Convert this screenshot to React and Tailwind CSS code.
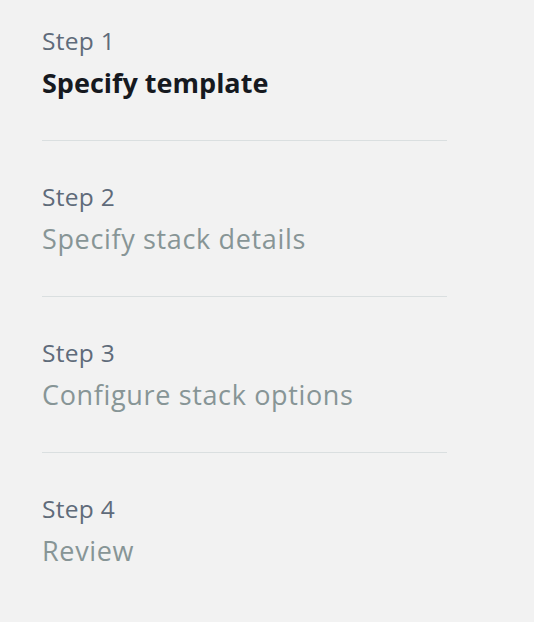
import React from 'react';

const STEPS = [
  { label: 'Step 1', title: 'Specify template', active: true },
  { label: 'Step 2', title: 'Specify stack details' },
  { label: 'Step 3', title: 'Configure stack options' },
  { label: 'Step 4', title: 'Review' },
];

function App() {
  return (
    <div
      className="min-h-[622px] w-[534px] bg-[#f2f2f2] pl-[42px] pt-[26px]"
      style={{ fontFamily: '"Open Sans", "Noto Sans", sans-serif' }}
    >
      <ul className="w-[405px]">
        {STEPS.map((step, i) => (
          <li
            key={step.label}
            className={
              i < STEPS.length - 1
                ? 'border-b border-[#dadfe0] pb-[41px] not-first:pt-[41px]'
                : 'pt-[41px]'
            }
          >
            <div className="text-[24.5px] leading-[30px] tracking-[0.3px] text-[#5f6b7a]">{step.label}</div>
            <div
              className={
                step.active
                  ? 'mt-[11px] text-[27px] font-bold leading-[32px] tracking-[0px] text-[#16191f]'
                  : 'mt-[11px] text-[27px] leading-[32px] tracking-[0.65px] text-[#879596]'
              }
            >
              {step.title}
            </div>
          </li>
        ))}
      </ul>
    </div>
  );
}

export default App;
